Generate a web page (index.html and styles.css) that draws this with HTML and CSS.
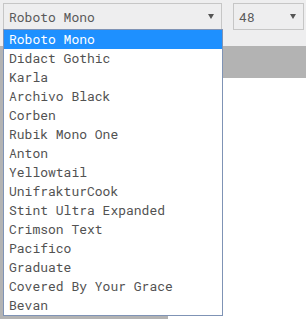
FILE: index.html
```html
<!DOCTYPE html>
<html lang="en">
  <head>
    <meta charset="UTF-8" />
    <title>Font picker</title>
    <link rel="stylesheet" href="styles.css">
  </head>
  <body>
    <!-- Панель выбора шрифта -->
    <div class="toolbar">
      <div class="select select-font">
        <span class="select-value">Roboto Mono</span>
        <span class="arrow"></span>
      </div>
      <div class="select select-size">
        <span class="select-value">48</span>
        <span class="arrow"></span>
      </div>

      <ul class="dropdown">
        <li class="active">Roboto Mono</li>
        <li>Didact Gothic</li>
        <li>Karla</li>
        <li>Archivo Black</li>
        <li>Corben</li>
        <li>Rubik Mono One</li>
        <li>Anton</li>
        <li>Yellowtail</li>
        <li>UnifrakturCook</li>
        <li>Stint Ultra Expanded</li>
        <li>Crimson Text</li>
        <li>Pacifico</li>
        <li>Graduate</li>
        <li>Covered By Your Grace</li>
        <li>Bevan</li>
      </ul>
    </div>

    <div class="band"></div>

    <div class="workspace">
      <div class="side"></div>
      <div class="canvas"></div>
    </div>
  </body>
</html>
```

FILE: styles.css
```css
:root {
  --font-mono: "Roboto Mono", "DejaVu Sans Mono", "Liberation Mono", monospace;
  --color-bar: #eeeeef;
  --color-border: #c6c6c6;
  --color-band: #b3b3b3;
  --color-list-border: #7f93b5;
  --color-active: #1e90ff;
  --color-text: #525252;
}

* {
  box-sizing: border-box;
  margin: 0;
  padding: 0;
}

body {
  font-family: var(--font-mono);
  font-size: 13px;
  color: var(--color-text);
  background: #fff;
  height: 100vh;
  display: flex;
  flex-direction: column;
  overflow: hidden;
}

/* ======= Панель ======= */
.toolbar {
  position: relative;
  height: 46px;
  background: var(--color-bar);
  padding: 3px 2px 0 3px;
  display: flex;
  align-items: flex-start;
  gap: 11px;
}

.select {
  height: 27px;
  border: 1px solid var(--color-border);
  background: var(--color-bar);
  display: flex;
  align-items: center;
  padding: 0 5px 0 5px;
  color: #5a5a5a;
}

.select-font {
  width: 219px;
}

.select-size {
  width: 71px;
}

.select-value {
  flex: 1;
}

.arrow {
  width: 0;
  height: 0;
  border-left: 3px solid transparent;
  border-right: 3px solid transparent;
  border-top: 5px solid #555;
  margin-right: 2px;
}

/* ======= Выпадающий список ======= */
.dropdown {
  position: absolute;
  top: 29px;
  left: 3px;
  width: 220px;
  list-style: none;
  background: #fff;
  border: 1px solid var(--color-list-border);
  z-index: 2;
}

.dropdown li {
  height: 19px;
  line-height: 19px;
  padding-left: 5px;
  white-space: nowrap;
}

.dropdown li.active {
  background: var(--color-active);
  color: #fff;
}

/* ======= Рабочая область ======= */
.band {
  height: 32px;
  background: var(--color-band);
}

.workspace {
  flex: 1;
  display: flex;
}

.side {
  width: 168px;
  background: var(--color-band);
}

.canvas {
  flex: 1;
  background: #fff;
}
```
